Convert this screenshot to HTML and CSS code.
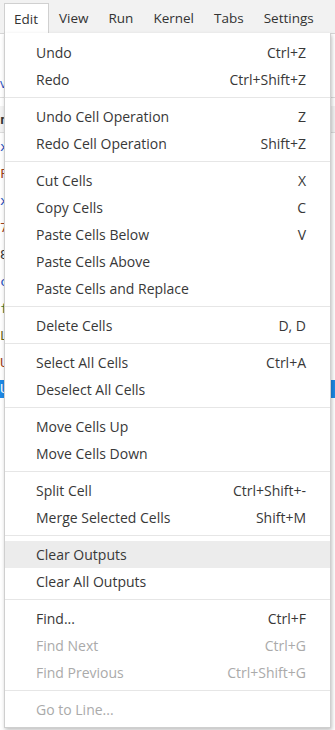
FILE: index.html
```html
<!DOCTYPE html>
<html lang="en">

<head>
    <meta charset="utf-8">
    <meta name="viewport" content="width=device-width, initial-scale=1.0">
    <title>Edit menu</title>
    <link rel="stylesheet" href="styles.css">
</head>

<body>

    <header class="menubar">
        <span class="top_item open">Edit</span>
        <span class="top_item">View</span>
        <span class="top_item">Run</span>
        <span class="top_item">Kernel</span>
        <span class="top_item">Tabs</span>
        <span class="top_item">Settings</span>
    </header>

    <main class="workspace">
        <div class="toolbar">v</div>
        <div class="line head">n</div>
        <div class="line blue">x</div>
        <div class="line red">F</div>
        <div class="line blue">x</div>
        <div class="line red">7</div>
        <div class="line">8</div>
        <div class="line blue">c</div>
        <div class="line green">f</div>
        <div class="line olive">L</div>
        <div class="line red">U</div>
        <div class="line selected">U</div>
    </main>

    <nav class="menu">
        <section class="group">
            <div class="entry"><span>Undo</span><span>Ctrl+Z</span></div>
            <div class="entry"><span>Redo</span><span>Ctrl+Shift+Z</span></div>
        </section>
        <section class="group">
            <div class="entry"><span>Undo Cell Operation</span><span>Z</span></div>
            <div class="entry"><span>Redo Cell Operation</span><span>Shift+Z</span></div>
        </section>
        <section class="group">
            <div class="entry"><span>Cut Cells</span><span>X</span></div>
            <div class="entry"><span>Copy Cells</span><span>C</span></div>
            <div class="entry"><span>Paste Cells Below</span><span>V</span></div>
            <div class="entry"><span>Paste Cells Above</span></div>
            <div class="entry"><span>Paste Cells and Replace</span></div>
        </section>
        <section class="group">
            <div class="entry"><span>Delete Cells</span><span>D, D</span></div>
        </section>
        <section class="group">
            <div class="entry"><span>Select All Cells</span><span>Ctrl+A</span></div>
            <div class="entry"><span>Deselect All Cells</span></div>
        </section>
        <section class="group">
            <div class="entry"><span>Move Cells Up</span></div>
            <div class="entry"><span>Move Cells Down</span></div>
        </section>
        <section class="group">
            <div class="entry"><span>Split Cell</span><span>Ctrl+Shift+-</span></div>
            <div class="entry"><span>Merge Selected Cells</span><span>Shift+M</span></div>
        </section>
        <section class="group">
            <div class="entry active"><span>Clear Outputs</span></div>
            <div class="entry"><span>Clear All Outputs</span></div>
        </section>
        <section class="group">
            <div class="entry"><span>Find...</span><span>Ctrl+F</span></div>
            <div class="entry disabled"><span>Find Next</span><span>Ctrl+G</span></div>
            <div class="entry disabled"><span>Find Previous</span><span>Ctrl+Shift+G</span></div>
        </section>
        <section class="group">
            <div class="entry disabled"><span>Go to Line...</span></div>
        </section>
    </nav>

</body></html>
```

FILE: styles.css
```css
* {
    box-sizing: border-box;
}

body {
    margin: 0;
    font-family: 'Open Sans', sans-serif;
    font-size: 14px;
    color: #383838;
    background: #fff;
    overflow: hidden;
    height: 730px;
    position: relative;
}

.menubar {
    display: flex;
    height: 34px;
    padding: 3px 0 0 4px;
    background: #f2f2f2;
    border-bottom: 1px solid #d6d6d6;
}

.top_item {
    padding: 0 10px 0 10px;
    line-height: 30px;
    font-size: 13.5px;
    color: #333;
}

.open {
    background: #fff;
    border: 1px solid #d0d0d0;
    border-bottom: none;
    padding-left: 9px;
}

.workspace {
    padding-top: 36px;
}

.toolbar {
    height: 28px;
    line-height: 26px;
    font-size: 13px;
    color: #1d4fc2;
    border-bottom: 1px solid #ddd;
    margin-bottom: 8px;
}

.line {
    height: 27px;
    line-height: 27px;
    font-family: 'DejaVu Sans Mono', monospace;
    font-size: 13px;
    color: #333;
}

.head {
    background: #f3f3f3;
    font-weight: bold;
    border-bottom: 1px solid #ddd;
}

.blue {
    color: #1d4fc2;
}

.red {
    color: #a0421b;
}

.green {
    color: #3c7a30;
}

.olive {
    color: #6a6a20;
}

.selected {
    margin-top: 4px;
    background: #1e88e5;
    color: #fff;
    height: 18px;
    line-height: 18px;
}

.menu {
    position: absolute;
    top: 33px;
    left: 4px;
    width: 327px;
    padding: 6px 0 4px;
    background: #fff;
    border: 1px solid #cfcfcf;
    border-top: none;
    box-shadow: 1px 2px 4px rgba(0, 0, 0, 0.25);
}

.group + .group {
    border-top: 1px solid #e6e6e6;
    margin-top: 4px;
    padding-top: 5px;
}

.entry {
    display: flex;
    justify-content: space-between;
    height: 27px;
    line-height: 27px;
    padding: 0 24px 0 31px;
}

.active {
    background: #ececec;
}

.disabled {
    color: #aaa;
}
```
